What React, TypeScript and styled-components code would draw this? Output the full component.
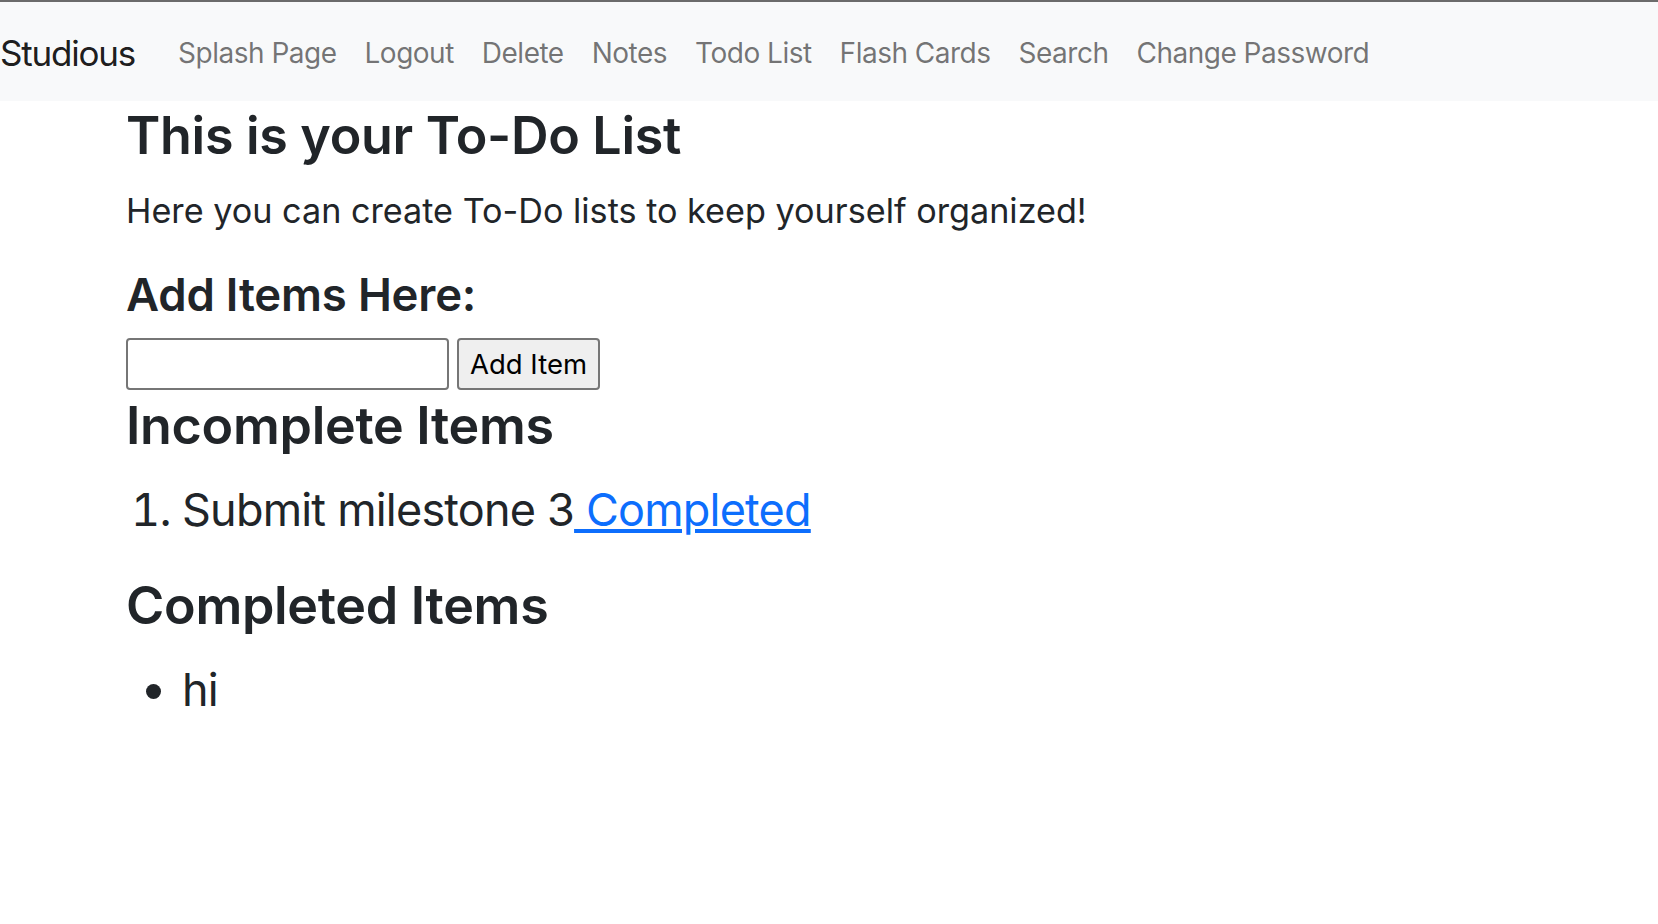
import React from "react";
import styled, { createGlobalStyle } from "styled-components";

const GlobalStyle = createGlobalStyle`
  body {
    margin: 0;
    background: #fff;
    color: #212529;
    font-family: Inter, "Noto Sans", sans-serif;
  }
`;

const links = [
  "Splash Page",
  "Logout",
  "Delete",
  "Notes",
  "Todo List",
  "Flash Cards",
  "Search",
  "Change Password",
];

const App = () => {
  return (
    <>
      <GlobalStyle />
      <Navbar>
        <Brand href="#">Studious</Brand>
        <NavLinks>
          {links.map((l) => (
            <NavLink key={l} href="#">
              {l}
            </NavLink>
          ))}
        </NavLinks>
      </Navbar>
      <Container>
        <Title>This is your To-Do List</Title>
        <Lead>Here you can create To-Do lists to keep yourself organized!</Lead>
        <SubTitle>Add Items Here:</SubTitle>
        <AddForm onSubmit={(e) => e.preventDefault()}>
          <TextInput type="text" />
          <AddButton type="submit">Add Item</AddButton>
        </AddForm>
        <Title>Incomplete Items</Title>
        <OrderedList>
          <Item>
            Submit milestone 3<ItemLink href="#"> Completed</ItemLink>
          </Item>
        </OrderedList>
        <Title>Completed Items</Title>
        <BulletList>
          <Item>hi</Item>
        </BulletList>
      </Container>
    </>
  );
};

const Navbar = styled.nav`
  box-sizing: border-box;
  display: flex;
  align-items: center;
  height: 101px;
  padding-top: 3px;
  border-top: 2px solid #6b6b6b;
  background-color: #f8f9fa;
`;

const Brand = styled.a`
  font-size: 35px;
  letter-spacing: -1.2px;
  color: rgba(0, 0, 0, 0.9);
  text-decoration: none;
  margin-right: 43px;
`;

const NavLinks = styled.div`
  display: flex;
  gap: 28px;
`;

const NavLink = styled.a`
  font-size: 28px;
  letter-spacing: -0.5px;
  color: rgba(0, 0, 0, 0.55);
  text-decoration: none;
`;

const Container = styled.main`
  padding: 4px 126px 0;
`;

const Title = styled.h1`
  margin: 0 0 18px;
  font-size: 52px;
  font-weight: 600;
  letter-spacing: -0.3px;
  line-height: 1.2;
`;

const Lead = styled.p`
  margin: 0 0 31px;
  font-size: 34.2px;
  line-height: 1.5;
`;

const SubTitle = styled.h2`
  margin: 0 0 16px;
  font-size: 45.5px;
  font-weight: 600;
  letter-spacing: -0.2px;
  line-height: 1.2;
`;

const AddForm = styled.form`
  display: flex;
  gap: 8px;
  margin-bottom: 5px;
`;

const TextInput = styled.input`
  box-sizing: border-box;
  width: 323px;
  height: 52px;
  border: 2px solid #767676;
  border-radius: 4px;
  background: #fff;
`;

const AddButton = styled.button`
  box-sizing: border-box;
  width: 143px;
  height: 52px;
  border: 2px solid #767676;
  border-radius: 4px;
  background: #efefef;
  color: #000;
  font-family: Inter, "Noto Sans", sans-serif;
  font-size: 27.5px;
`;

const OrderedList = styled.ol`
  margin: 0 0 32px;
  padding-left: 56px;
`;

const BulletList = styled.ul`
  margin: 0;
  padding-left: 56px;
`;

const Item = styled.li`
  font-size: 45px;
  letter-spacing: -0.8px;
  line-height: 1.5;
`;

const ItemLink = styled.a`
  color: #0d6efd;
  text-decoration: underline;
`;

export default App;
